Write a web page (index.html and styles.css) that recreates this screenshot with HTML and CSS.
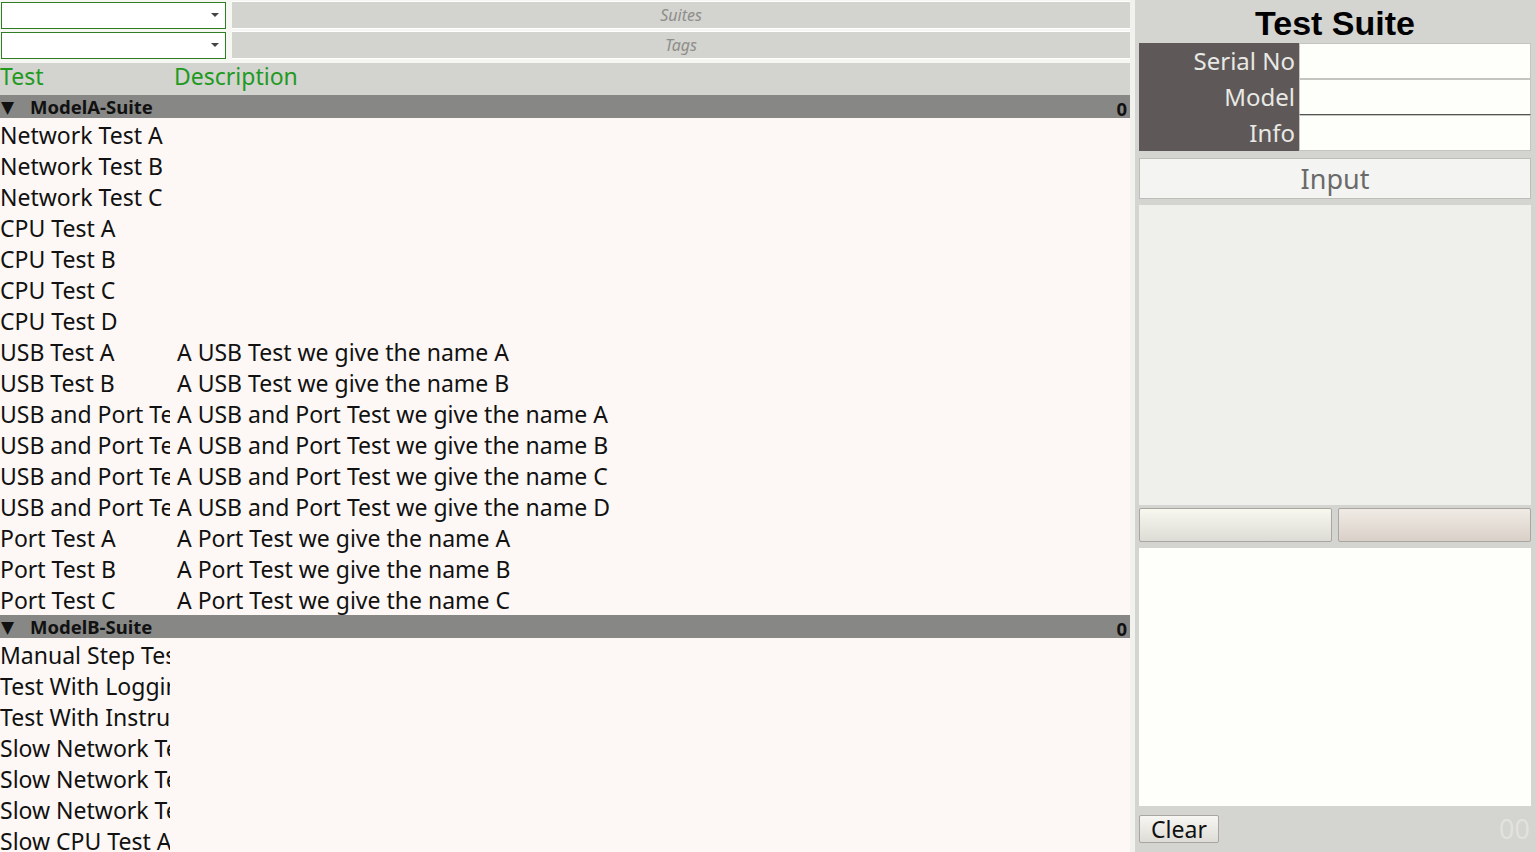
FILE: index.html
```html
<!DOCTYPE html>
<html lang="en">
<head>
    <meta charset="UTF-8">
    <title>Test Suite</title>
    <link rel="stylesheet" href="styles.css">
</head>
<body>

<div class="main">
    <div class="filters">
        <div class="filter-row">
            <div class="combo"><span class="arrow"></span></div>
            <div class="filter-bar">Suites</div>
        </div>
        <div class="filter-row">
            <div class="combo"><span class="arrow"></span></div>
            <div class="filter-bar">Tags</div>
        </div>
    </div>

    <div class="list-head">
        <div class="col-test">Test</div>
        <div class="col-desc">Description</div>
    </div>

    <div class="list">
        <div class="suite"><span class="tri">&#9660;</span><span class="suite-name">ModelA-Suite</span><span class="count">0</span></div>
        <div class="row"><div class="col-test">Network Test A</div><div class="col-desc"></div></div>
        <div class="row"><div class="col-test">Network Test B</div><div class="col-desc"></div></div>
        <div class="row"><div class="col-test">Network Test C</div><div class="col-desc"></div></div>
        <div class="row"><div class="col-test">CPU Test A</div><div class="col-desc"></div></div>
        <div class="row"><div class="col-test">CPU Test B</div><div class="col-desc"></div></div>
        <div class="row"><div class="col-test">CPU Test C</div><div class="col-desc"></div></div>
        <div class="row"><div class="col-test">CPU Test D</div><div class="col-desc"></div></div>
        <div class="row"><div class="col-test">USB Test A</div><div class="col-desc">A USB Test we give the name A</div></div>
        <div class="row"><div class="col-test">USB Test B</div><div class="col-desc">A USB Test we give the name B</div></div>
        <div class="row"><div class="col-test">USB and Port Test A</div><div class="col-desc">A USB and Port Test we give the name A</div></div>
        <div class="row"><div class="col-test">USB and Port Test B</div><div class="col-desc">A USB and Port Test we give the name B</div></div>
        <div class="row"><div class="col-test">USB and Port Test C</div><div class="col-desc">A USB and Port Test we give the name C</div></div>
        <div class="row"><div class="col-test">USB and Port Test D</div><div class="col-desc">A USB and Port Test we give the name D</div></div>
        <div class="row"><div class="col-test">Port Test A</div><div class="col-desc">A Port Test we give the name A</div></div>
        <div class="row"><div class="col-test">Port Test B</div><div class="col-desc">A Port Test we give the name B</div></div>
        <div class="row"><div class="col-test">Port Test C</div><div class="col-desc">A Port Test we give the name C</div></div>

        <div class="suite"><span class="tri">&#9660;</span><span class="suite-name">ModelB-Suite</span><span class="count">0</span></div>
        <div class="row"><div class="col-test">Manual Step Test</div><div class="col-desc"></div></div>
        <div class="row"><div class="col-test">Test With Logging</div><div class="col-desc"></div></div>
        <div class="row"><div class="col-test">Test With Instructions</div><div class="col-desc"></div></div>
        <div class="row"><div class="col-test">Slow Network Test A</div><div class="col-desc"></div></div>
        <div class="row"><div class="col-test">Slow Network Test B</div><div class="col-desc"></div></div>
        <div class="row"><div class="col-test">Slow Network Test C</div><div class="col-desc"></div></div>
        <div class="row"><div class="col-test">Slow CPU Test A</div><div class="col-desc"></div></div>
    </div>
</div>

<div class="splitter"></div>

<div class="side">
    <h1>Test Suite</h1>

    <div class="info">
        <div class="info-label">Serial No</div><div class="info-field"></div>
        <div class="info-label">Model</div><div class="info-field"></div>
        <div class="info-label">Info</div><div class="info-field"></div>
    </div>

    <div class="input-btn">Input</div>

    <div class="input-area"></div>

    <div class="actions">
        <div class="act act-left"></div>
        <div class="act act-right"></div>
    </div>

    <div class="log"></div>

    <div class="footer">
        <button class="clear">Clear</button>
        <span class="timer">00</span>
    </div>
</div>

</body>
</html>
```

FILE: styles.css
```css
* {
    margin: 0;
    padding: 0;
    box-sizing: border-box;
}

body {
    font-family: 'Noto Sans', 'DejaVu Sans', sans-serif;
    background-color: #d4d4d0;
    color: #111;
    display: flex;
    height: 852px;
    overflow: hidden;
}

/* left: test list */

.main {
    width: 1130px;
    display: flex;
    flex-direction: column;
    background-color: #f6f6f2;
}

.filters {
    padding-top: 1px;
}

.filter-row {
    display: flex;
    height: 30px;
    padding-bottom: 2px;
}

.combo {
    position: relative;
    width: 225px;
    height: 27px;
    margin-top: 1px;
    margin-left: 1px;
    background-color: #fff;
    border: 1px solid #2f7d22;
}

.arrow {
    position: absolute;
    right: 6px;
    top: 10px;
    border-left: 4px solid transparent;
    border-right: 4px solid transparent;
    border-top: 4px solid #444;
}

.filter-bar {
    flex: 1;
    margin-left: 6px;
    background-color: #d3d3cf;
    border-top: 1px solid #fff;
    border-bottom: 1px solid #fff;
    color: #8e8e8a;
    font-style: italic;
    font-size: 16px;
    text-align: center;
    line-height: 26px;
}

.list-head {
    display: flex;
    height: 32px;
    margin-top: 2px;
    background-color: #d3d3cf;
    color: #1f9a1f;
    font-size: 23px;
    line-height: 26px;
}

.list-head .col-test {
    width: 174px;
}

.list {
    flex: 1;
    background-color: #fdf8f5;
    overflow: hidden;
}

.suite {
    display: flex;
    align-items: center;
    height: 23px;
    margin-bottom: 1px;
    background-color: #878786;
    font-size: 18.5px;
    font-weight: bold;
    color: #111;
    line-height: 19px;
}

.tri {
    width: 30px;
    font-size: 17px;
    padding-left: 1px;
}

.suite-name {
    flex: 1;
}

.count {
    padding-right: 3px;
    padding-top: 3px;
}

.row {
    display: flex;
    height: 31px;
    font-size: 23px;
    line-height: 33px;
    white-space: nowrap;
}

.row .col-test {
    width: 170px;
    overflow: hidden;
}

.row .col-desc {
    padding-left: 7px;
}

.splitter {
    width: 5px;
    background-color: #f1f1ed;
}

/* right: suite panel */

.side {
    width: 401px;
    display: flex;
    flex-direction: column;
    padding: 0 5px 0 4px;
}

h1 {
    font-family: 'Liberation Sans', Arial, sans-serif;
    font-size: 34px;
    font-weight: bold;
    text-align: center;
    height: 43px;
    line-height: 46px;
    color: #000;
}

.info {
    display: grid;
    grid-template-columns: 160px 1fr;
    background-color: #5e5858;
}

.info-label {
    height: 36px;
    color: #e8e8e4;
    font-size: 24px;
    text-align: right;
    padding-right: 4px;
    line-height: 36px;
}

.info-field {
    height: 36px;
    background-color: #fefefa;
    border: 1px solid #c4c4c0;
}

.info-field:nth-child(4) {
    border-bottom-color: #555;
}

.input-btn {
    margin-top: 7px;
    height: 41px;
    background-color: #f4f5f2;
    border: 1px solid #bdbdb9;
    color: #6a6a6a;
    font-size: 27px;
    text-align: center;
    line-height: 39px;
}

.input-area {
    margin-top: 6px;
    height: 300px;
    background-color: #efefeb;
}

.actions {
    display: flex;
    gap: 6px;
    padding-top: 3px;
    padding-bottom: 6px;
    background-color: #d4d4d0;
}

.act {
    flex: 1;
    height: 34px;
    border: 1px solid #a9a6a2;
    border-radius: 2px;
}

.act-left {
    background: linear-gradient(#f9f8ef, #dcdbd5);
}

.act-right {
    background: linear-gradient(#f0ebe5, #d9d0c8);
}

.log {
    height: 258px;
    background-color: #fefefa;
}

.footer {
    display: flex;
    justify-content: space-between;
    align-items: flex-start;
    padding-top: 9px;
}

.clear {
    font-family: 'Noto Sans', 'DejaVu Sans', sans-serif;
    font-size: 23px;
    width: 80px;
    height: 28px;
    line-height: 26px;
    color: #111;
    background: linear-gradient(#f7f6f2, #dedcd6);
    border: 1px solid #a9a6a2;
    border-radius: 2px;
}

.timer {
    font-size: 27px;
    line-height: 28px;
    color: #e2e2de;
    padding-right: 1px;
}
```
